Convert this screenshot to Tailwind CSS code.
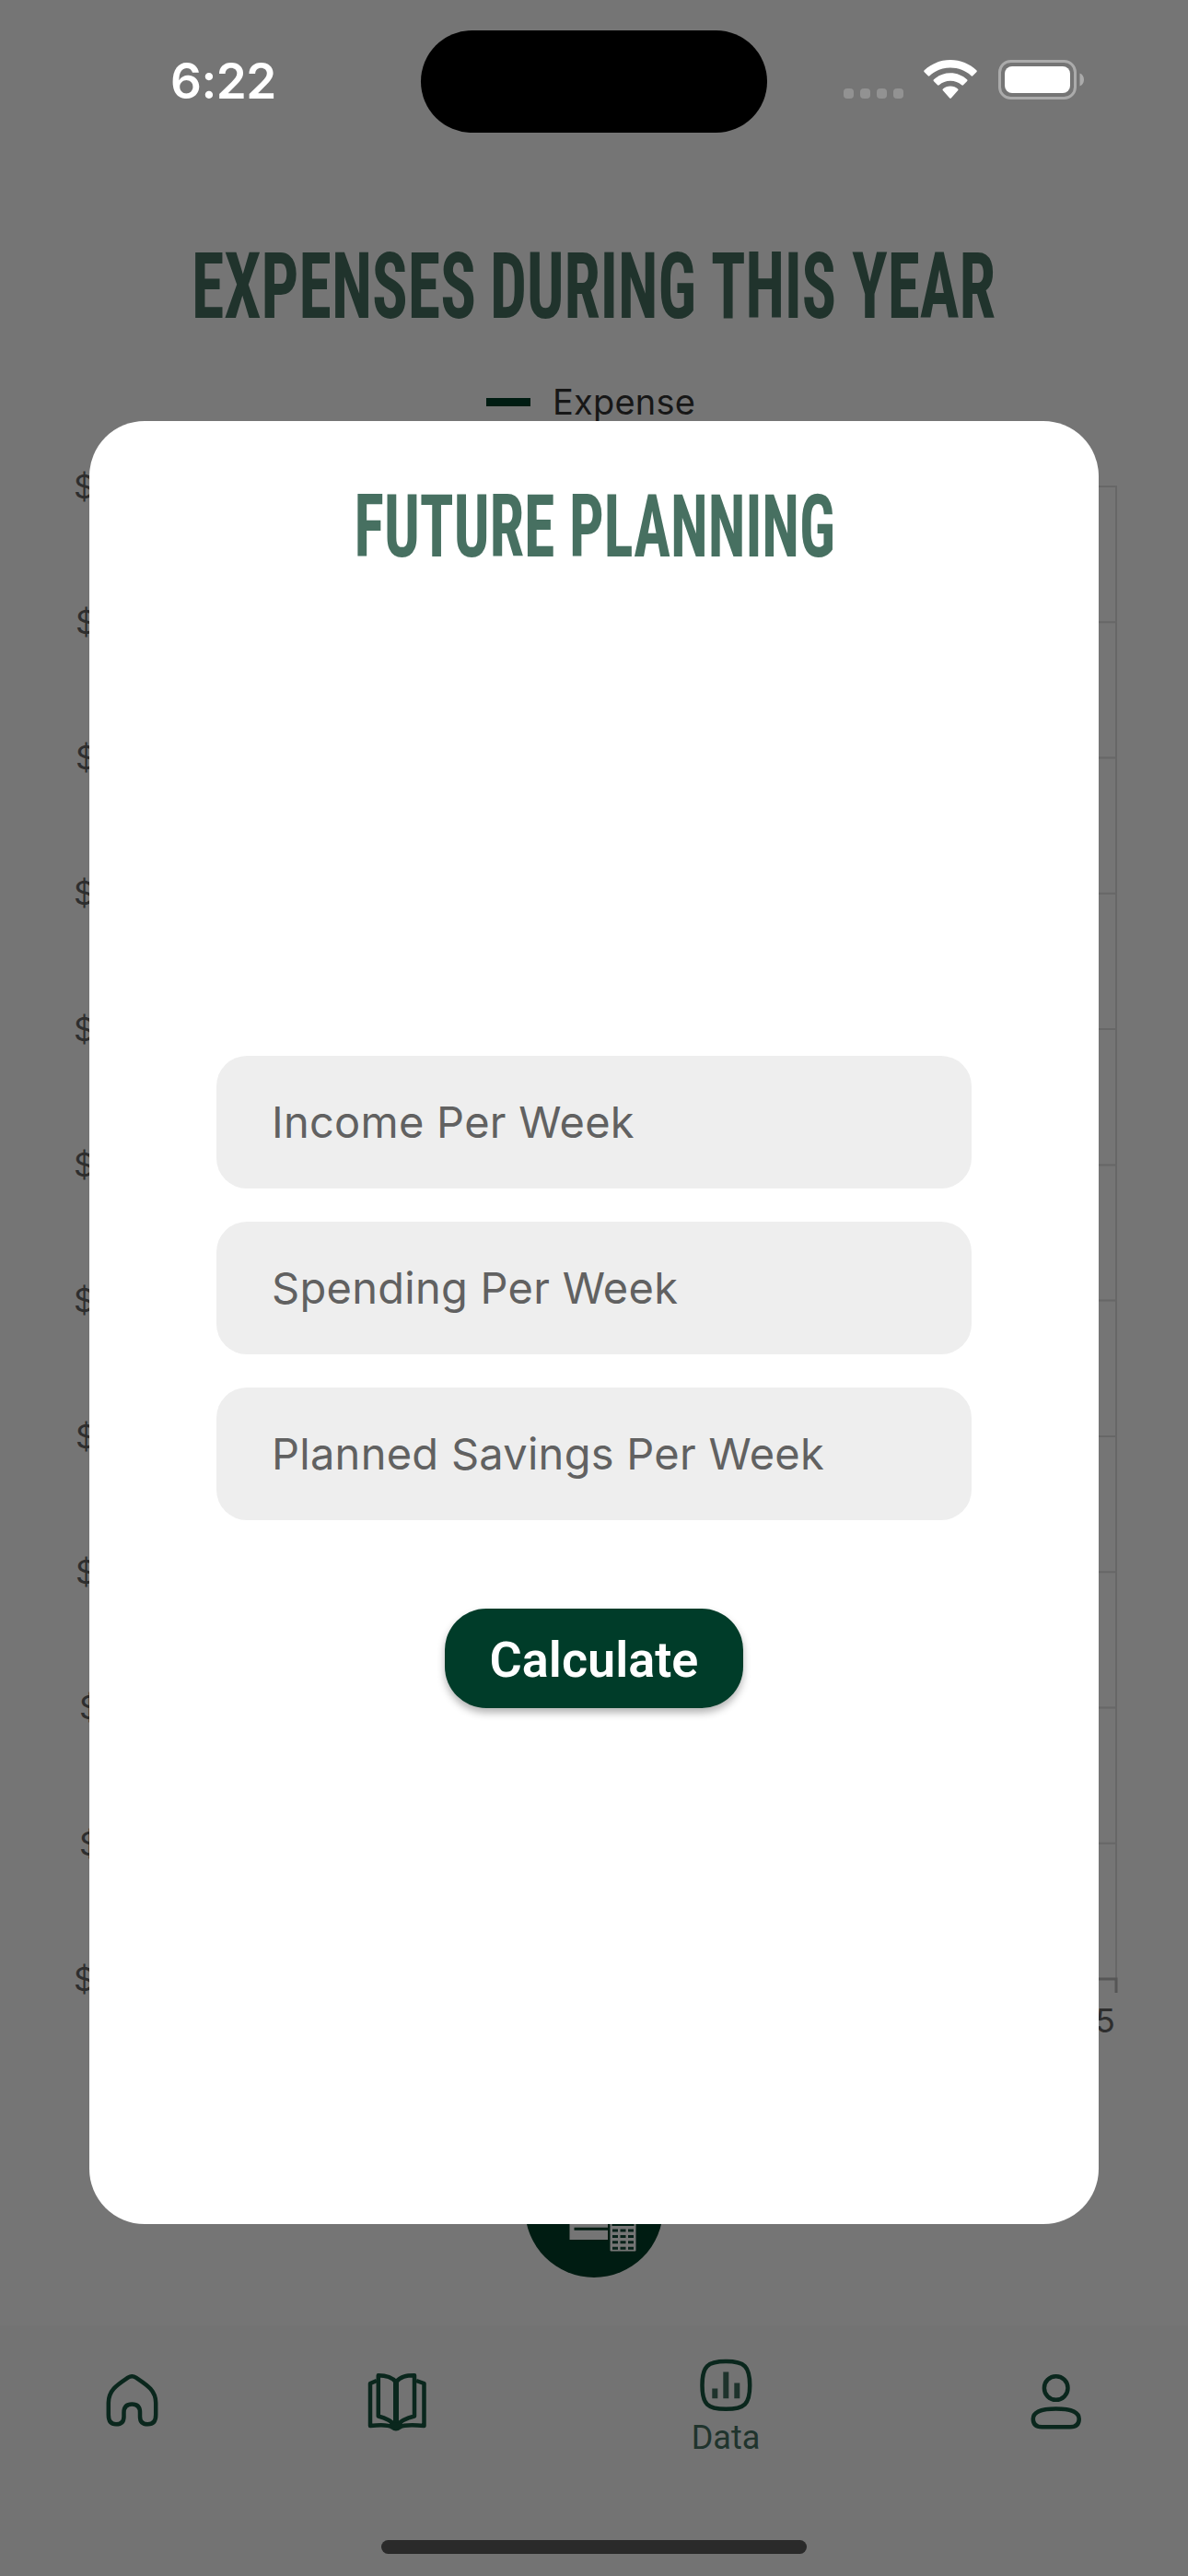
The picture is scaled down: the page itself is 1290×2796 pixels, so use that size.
<!DOCTYPE html>
<html lang="en">
<head>
<meta charset="utf-8">
<title>Future Planning</title>
<script src="https://cdn.jsdelivr.net/npm/@tailwindcss/browser@4"></script>
</head>
<body class="bg-[#757575]">
<div class="relative flex h-[2796px] w-[1290px] flex-col overflow-hidden bg-[#757575] font-['Inter',sans-serif]">

  <!-- Status bar -->
  <header class="flex h-[177px] shrink-0 items-start">
    <div class="w-[457px] pt-[55px] pl-[185px] text-[53px] leading-[66px] font-semibold tracking-[-0.5px] text-white">6:22</div>
    <div class="mt-[33px] h-[111px] w-[376px] rounded-full bg-black"></div>
    <div class="flex items-end pt-[65px] pl-[83px]">
      <div class="mb-px flex gap-[7px]">
        <span class="h-[11px] w-[11px] rounded-[4px] bg-[#929292]"></span>
        <span class="h-[11px] w-[11px] rounded-[4px] bg-[#929292]"></span>
        <span class="h-[11px] w-[11px] rounded-[4px] bg-[#929292]"></span>
        <span class="h-[11px] w-[11px] rounded-[4px] bg-[#929292]"></span>
      </div>
      <svg class="ml-[22px] h-[43px] w-[58px]" viewBox="0 0 58 43" fill="#fff">
        <path d="M29 0C40 0 50 4.300 57.300 11.300Q58.300 12.300 57.300 13.300L53.300 17.300Q52.500 18.100 51.500 17.200C45.500 11.600 37.700 8.600 29 8.600S12.500 11.600 6.500 17.200Q5.500 18.100 4.700 17.300L.7 13.300Q-.3 12.300 .7 11.300C8 4.300 18 0 29 0Z"/>
        <path d="M29 14.300C36 14.300 42.300 17 47 21.300Q48 22.300 47 23.300L43 27.300Q42.200 28.100 41.200 27.300C37.900 24.500 33.700 22.800 29 22.800S20.100 24.500 16.800 27.300Q15.800 28.100 15 27.300L11 23.300Q10 22.300 11 21.300C15.700 17 22 14.300 29 14.300Z"/>
        <path d="M29 28.500C32.200 28.500 35 29.600 37.100 31.400Q38.100 32.300 37.100 33.300L30 41.300Q29 42.300 28 41.300L20.900 33.300Q19.900 32.300 20.900 31.400C23 29.600 25.800 28.500 29 28.500Z"/>
      </svg>
      <svg class="ml-[23px] h-[43px] w-[94px]" viewBox="0 0 94 43">
        <rect x="1.500" y="1.500" width="82" height="40" rx="12" fill="none" stroke="#ababab" stroke-width="3"/>
        <rect x="7" y="7" width="71" height="29" rx="8" fill="#fff"/>
        <path d="M88.500 14.500C91 15.500 93 18 93 21.500S91 27.500 88.500 28.500Z" fill="#ababab"/>
      </svg>
    </div>
  </header>

  <!-- Page title -->
  <h1 class="mt-[63px] h-[140px] shrink-0">
    <svg class="block h-[140px] w-[1290px]" viewBox="0 0 1290 140" fill="#20332c" font-family="Roboto, sans-serif" font-weight="700" font-stretch="75%" font-size="100">
      <text x="208" y="105" textLength="309" lengthAdjust="spacingAndGlyphs">EXPENSES</text>
      <text x="532" y="105" textLength="224" lengthAdjust="spacingAndGlyphs">DURING</text>
      <text x="772" y="105" textLength="136" lengthAdjust="spacingAndGlyphs">THIS</text>
      <text x="925" y="105" textLength="156" lengthAdjust="spacingAndGlyphs">YEAR</text>
    </svg>
  </h1>

  <!-- Chart legend -->
  <div class="mt-[32px] flex h-[48px] shrink-0 items-center pl-[528px]">
    <span class="h-[9px] w-[48px] bg-[#001c12]"></span>
    <span class="ml-[24px] text-[38px] leading-[48px] tracking-[0.2px] text-[#171717]">Expense</span>
  </div>

  <!-- Chart -->
  <svg class="block h-[1760px] w-[1290px] shrink-0" viewBox="0 460 1290 1760" font-size="36" fill="#2e2e2e">
    <g stroke="#676767" stroke-width="2">
      <path d="M120 528H1213M120 675.300H1212M120 822.500H1212M120 969.800H1212M120 1117H1212M120 1264.400H1212M120 1411.600H1212M120 1558.900H1212M120 1706.200H1212M120 1853.500H1212M120 2000.700H1212M1212 528V2148"/>
    </g>
    <path d="M120 2148H1213.500M1212 2148V2163" stroke="#565656" stroke-width="3" fill="none"/>
    <text x="80" y="541">$</text>
    <text x="82" y="688">$</text>
    <text x="82" y="835">$</text>
    <text x="80" y="982">$</text>
    <text x="80" y="1129.500">$</text>
    <text x="80" y="1277">$</text>
    <text x="80" y="1424">$</text>
    <text x="82" y="1571.500">$</text>
    <text x="82" y="1719">$</text>
    <text x="86" y="1866">$</text>
    <text x="86" y="2013.500">$</text>
    <text x="80" y="2160.500">$</text>
    <text x="1211" y="2206" text-anchor="end">5</text>
  </svg>

  <!-- Floating planner button -->
  <div class="flex h-[304px] shrink-0 justify-center pt-[102px]">
    <svg class="h-[150px] w-[150px]" viewBox="570.500 2322 150 150">
      <circle cx="645.500" cy="2397" r="75" fill="#001c12"/>
      <rect x="619" y="2370" width="41.500" height="61" fill="#757575"/>
      <path d="M624 2419.300H661" stroke="#001c12" stroke-width="3"/>
      <rect x="663" y="2385" width="28" height="58.500" rx="1" fill="#757575"/>
      <path d="M665 2414.500H689" stroke="#001c12" stroke-width="3"/>
      <path d="M665.500 2421H671.500M674 2421H680M682.500 2421H688.500M665.500 2427.400H671.500M674 2427.400H680M682.500 2427.400H688.500M665.500 2433.800H671.500M674 2433.800H680M682.500 2433.800H688.500M665.500 2440.200H671.500M674 2440.200H680M682.500 2440.200H688.500" stroke="#08221a" stroke-width="3"/>
    </svg>
  </div>

  <!-- Bottom navigation -->
  <nav class="flex grow flex-col bg-[#737373]">
    <div class="flex h-[233px] items-start text-[#0a271d]">
      <svg class="mt-[52px] ml-[113px] h-[60px] w-[60px]" viewBox="113 2576 60 60" fill="none" stroke="currentColor" stroke-width="4.500">
        <path d="M117.800 2608C117.800 2594 128 2588 139 2580.600Q143.300 2578 147.600 2580.600C158.500 2588 169.200 2594 169.200 2608V2621Q169.200 2631.300 160.500 2631.300Q152 2631.300 152 2623V2618.500Q152 2609.500 143.300 2609.500T134.500 2618.500V2623Q134.500 2631.300 126 2631.300Q117.800 2631.300 117.800 2621Z"/>
      </svg>
      <svg class="mt-[50px] ml-[225px] h-[68px] w-[68px]" viewBox="398 2574 68 68" fill="none" stroke="currentColor" stroke-width="4.500" stroke-linejoin="round">
        <path d="M430 2585.500C425 2579.500 419 2578.300 410.800 2578.300V2622.500C419 2624.500 425 2627.500 430 2633.500C435 2627.500 441 2624.500 450 2622.500V2578.300C441 2578.300 435 2579.500 430 2585.500"/>
        <path d="M430 2583V2634" stroke-width="6"/>
        <path d="M409 2584L402 2587V2633C411 2632 422 2632 426 2634.500Q430 2638 434 2634.500C438 2632 449 2632 460.500 2633V2587L452 2584"/>
        <path d="M423 2631L430 2629L437 2631L430 2637Z" fill="currentColor" stroke-width="1"/>
      </svg>
      <div class="mt-[35px] ml-[285px] flex w-[74px] flex-col items-center">
        <svg class="h-[60px] w-[60px]" viewBox="758 2559 60 60" fill="none" stroke="currentColor">
          <path d="M762.500 2589C762.500 2568.500 768 2563 788.300 2563S814.200 2568.500 814.200 2589S808.500 2614.800 788.300 2614.800S762.500 2609.500 762.500 2589Z" stroke-width="4.500"/>
          <path d="M776.300 2592.500V2603.300M788.300 2574.500V2603.300M800.300 2586.500V2603.300" stroke="#1e332c" stroke-width="6"/>
        </svg>
        <span class="mt-[6px] font-['Roboto',sans-serif] text-[36px] leading-[42px] text-[#20342d]">Data</span>
      </div>
      <svg class="mt-[51px] ml-[291px] h-[64px] w-[60px]" viewBox="1116 2575 60 64" fill="none" stroke="currentColor" stroke-width="4.500">
        <circle cx="1146.700" cy="2592" r="12.800"/>
        <path d="M1121.800 2625.500C1121.800 2617 1133 2614.500 1146.700 2614.500S1171.700 2617 1171.700 2625.500Q1171.700 2634.300 1162 2634.300H1131.500Q1121.800 2634.300 1121.800 2625.500Z"/>
      </svg>
    </div>
    <div class="ml-[414px] h-[15px] w-[462px] rounded-full bg-[#2a2a2a]"></div>
  </nav>

  <!-- Dialog -->
  <section class="absolute top-[456.500px] left-[96.750px] flex h-[1957.750px] w-[1096.500px] flex-col items-center rounded-[60px] bg-white">
    <h2 class="mt-[50.500px] h-[140px]">
      <svg class="block h-[140px] w-[540px]" viewBox="375 507 540 140" fill="#477061" font-family="Roboto, sans-serif" font-weight="700" font-stretch="75%" font-size="94.600">
        <text x="384.500" y="604" textLength="218" lengthAdjust="spacingAndGlyphs">FUTURE</text>
        <text x="618" y="604" textLength="289" lengthAdjust="spacingAndGlyphs">PLANNING</text>
      </svg>
    </h2>
    <form class="mt-[499px] flex flex-col items-center">
      <div class="flex w-[820px] flex-col gap-[36px] text-[47px] leading-[56px] tracking-[0.270px] text-[#616161]">
        <div class="flex h-[144px] items-center rounded-[33px] bg-[#eee] pl-[60px]">Income Per Week</div>
        <div class="flex h-[144px] items-center rounded-[33px] bg-[#eee] pl-[60px]">Spending Per Week</div>
        <div class="flex h-[144px] items-center rounded-[33px] bg-[#eee] pl-[60px]">Planned Savings Per Week</div>
      </div>
      <button type="button" class="mt-[96px] h-[108px] w-[324px] rounded-[45px] bg-[#003c29] pt-[3px] font-['Roboto',sans-serif] text-[54px] leading-[64px] font-semibold text-white shadow-[0_5px_9px_rgba(0,0,0,0.3)]">Calculate</button>
    </form>
  </section>
</div>
</body>
</html>
